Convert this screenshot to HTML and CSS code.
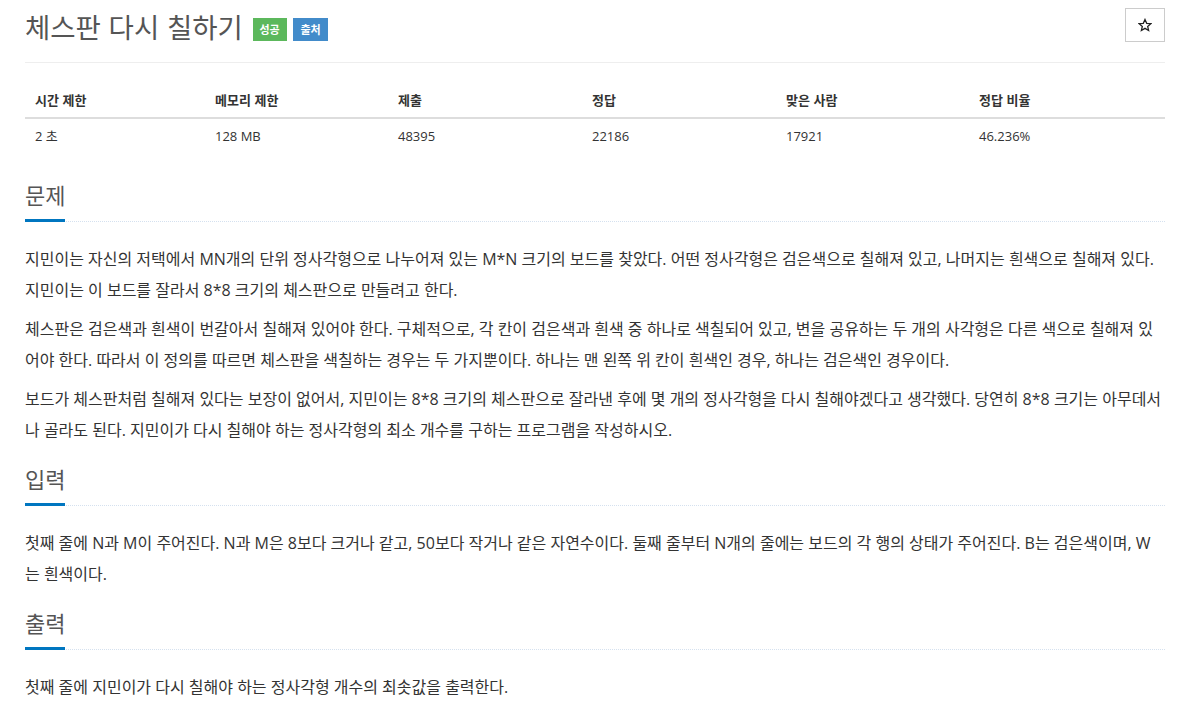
FILE: index.html
```html
<!DOCTYPE html>
<html lang="ko">
<head>
<meta charset="utf-8">
<title>체스판 다시 칠하기</title>
<link rel="stylesheet" href="styles.css">
</head>
<body>
<div class="container">
  <div class="page-header">
    <h1 class="title">체스판 다시 칠하기 <span class="label label-success">성공</span> <span class="label label-info">출처</span></h1>
    <button class="star-btn" type="button" aria-label="즐겨찾기"><svg width="14" height="14" viewBox="0 0 24 24"><path d="M12 2.5l2.9 6.6 7.1.6-5.4 4.7 1.6 7-6.2-3.7-6.2 3.7 1.6-7L2 9.7l7.1-.6z" fill="none" stroke="#222" stroke-width="2.2" stroke-linejoin="miter"/></svg></button>
  </div>
  <table class="info-table">
    <thead>
      <tr><th class="c1">시간 제한</th><th class="c2">메모리 제한</th><th class="c3">제출</th><th class="c4">정답</th><th class="c5">맞은 사람</th><th>정답 비율</th></tr>
    </thead>
    <tbody>
      <tr><td>2 초</td><td>128 MB</td><td>48395</td><td>22186</td><td>17921</td><td>46.236%</td></tr>
    </tbody>
  </table>

  <section class="problem-section">
    <div class="headline"><h2>문제</h2></div>
    <div class="problem-text">
      <p>지민이는 자신의 저택에서 MN개의 단위 정사각형으로 나누어져 있는 M*N 크기의 보드를 찾았다. 어떤 정사각형은 검은색으로 칠해져 있고, 나머지는 흰색으로 칠해져 있다. 지민이는 이 보드를 잘라서 8*8 크기의 체스판으로 만들려고 한다.</p>
      <p>체스판은 검은색과 흰색이 번갈아서 칠해져 있어야 한다. 구체적으로, 각 칸이 검은색과 흰색 중 하나로 색칠되어 있고, 변을 공유하는 두 개의 사각형은 다른 색으로 칠해져 있어야 한다. 따라서 이 정의를 따르면 체스판을 색칠하는 경우는 두 가지뿐이다. 하나는 맨 왼쪽 위 칸이 흰색인 경우, 하나는 검은색인 경우이다.</p>
      <p>보드가 체스판처럼 칠해져 있다는 보장이 없어서, 지민이는 8*8 크기의 체스판으로 잘라낸 후에 몇 개의 정사각형을 다시 칠해야겠다고 생각했다. 당연히 8*8 크기는 아무데서나 골라도 된다. 지민이가 다시 칠해야 하는 정사각형의 최소 개수를 구하는 프로그램을 작성하시오.</p>
    </div>
  </section>

  <section class="problem-section">
    <div class="headline"><h2>입력</h2></div>
    <div class="problem-text">
      <p>첫째 줄에 N과 M이 주어진다. N과 M은 8보다 크거나 같고, 50보다 작거나 같은 자연수이다. 둘째 줄부터 N개의 줄에는 보드의 각 행의 상태가 주어진다. B는 검은색이며, W는 흰색이다.</p>
    </div>
  </section>

  <section class="problem-section">
    <div class="headline"><h2>출력</h2></div>
    <div class="problem-text">
      <p>첫째 줄에 지민이가 다시 칠해야 하는 정사각형 개수의 최솟값을 출력한다.</p>
    </div>
  </section>
</div>
</body>
</html>
```

FILE: styles.css
```css
* { box-sizing: border-box; }
html, body {
  margin: 0;
  padding: 0;
  background: #fff;
}
body {
  font-family: "Open Sans", "Noto Sans CJK KR", sans-serif;
  color: #333;
  font-size: 13px;
}
.container {
  width: 1140px;
  margin-left: 25px;
}
.page-header {
  display: flex;
  justify-content: space-between;
  align-items: flex-start;
  padding-top: 8px;
  padding-bottom: 17px;
  border-bottom: 1px solid #eee;
}
.title {
  margin: 0;
  font-size: 27.5px;
  font-weight: 400;
  color: #555;
  line-height: 37px;
  font-family: "Noto Sans CJK KR", sans-serif;
}
.label {
  display: inline-block;
  font-size: 11px;
  font-weight: 700;
  color: #fff;
  padding: 0 7px;
  line-height: 23px;
  height: 23px;
  vertical-align: 4px;
  font-family: "Noto Sans CJK KR", sans-serif;
}
.label-success { background: #5cb85c; margin-left: 2px; }
.label-info { background: #428bca; margin-left: -1px; }
.star-btn {
  display: flex;
  align-items: center;
  justify-content: center;
  width: 40px;
  height: 34px;
  border: 1px solid #ccc;
  background: #fff;
  padding: 0;
}
.info-table {
  width: 100%;
  border-collapse: collapse;
  margin-top: 19px;
  margin-bottom: 25px;
}
.info-table th, .info-table td {
  text-align: left;
  padding: 8px 10px;
  line-height: 19px;
  font-size: 13px;
}
.info-table th {
  font-weight: 700;
  border-bottom: 2px solid #ddd;
  font-family: "Noto Sans CJK KR", sans-serif;
}
.info-table td {
  font-family: "Open Sans", "Noto Sans CJK KR", sans-serif;
}
.c1 { width: 180px; }
.c2 { width: 183px; }
.c3 { width: 194px; }
.c4 { width: 194px; }
.c5 { width: 193px; }
.headline {
  border-bottom: 1px dotted #d5e1ef;
  margin-bottom: 22px;
}
.headline h2 {
  display: inline-block;
  margin: 0 0 -1px 0;
  font-size: 22px;
  font-weight: 400;
  color: #555;
  line-height: 30px;
  padding-bottom: 10px;
  border-bottom: 3px solid #0076c0;
  width: 40px;
  white-space: nowrap;
  font-family: "Noto Sans CJK KR", sans-serif;
}
.problem-section {
  margin-top: 17px;
}
.problem-section:first-of-type {
  margin-top: 0;
}
.problem-text {
  font-size: 16px;
  line-height: 31px;
  font-family: "Open Sans", "Noto Sans CJK KR", sans-serif;
}
.problem-text p {
  margin: 0 0 8px 0;
}
```
